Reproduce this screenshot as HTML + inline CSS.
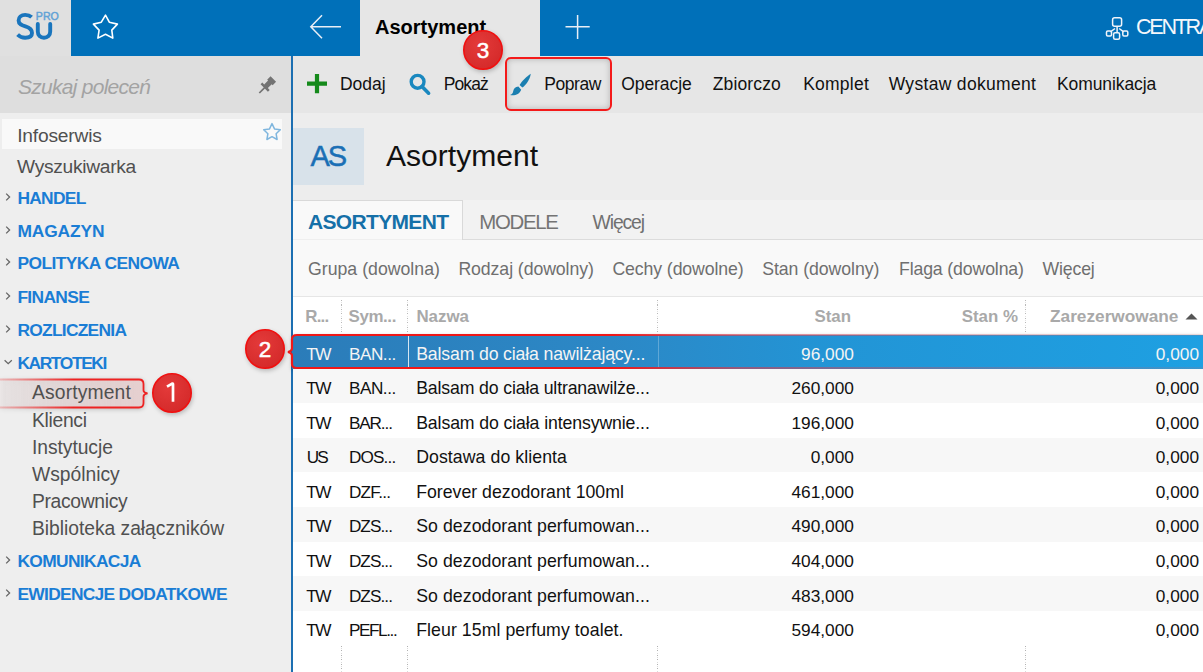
<!DOCTYPE html>
<html><head><meta charset="utf-8"><style>
html,body{margin:0;padding:0;}
body{width:1203px;height:672px;overflow:hidden;position:relative;font-family:"Liberation Sans", sans-serif;background:#fff;}
</style></head><body>
<div style="position:absolute;left:0px;top:0px;width:1203px;height:56px;background:#0070b9;"></div>
<div style="position:absolute;left:0px;top:0px;width:71px;height:56px;background:#e0e0e0;"></div>
<svg style="position:absolute;left:0;top:0" width="71" height="56">
<path d="M31.6 17.2 C29.8 15.5 27.6 14.9 25.2 14.9 C21.2 14.9 18.6 17.2 18.6 20.4 C18.6 24.3 21.8 25.3 25.4 26.4 C29.6 27.6 32 29.3 32 33 C32 36.3 29.2 37.7 25.2 37.7 C22.2 37.7 19.6 36.6 17.6 34.6" fill="none" stroke="#1a75bd" stroke-width="3.9"/>
<path d="M37.8 24 V31.6 C37.8 35.6 40.4 37.7 44 37.7 C47.6 37.7 50.2 35.6 50.2 31.6 V24" fill="none" stroke="#1a75bd" stroke-width="3.9" stroke-linecap="round"/>
<text x="35.8" y="19.9" font-family="Liberation Sans" font-weight="400" font-size="10.6" fill="#62a2d6" stroke="#62a2d6" stroke-width="0.45" textLength="23">PRO</text>
</svg>
<svg style="position:absolute;left:85px;top:8px" width="40" height="40">
<path d="M20.5 7.1 L24.3 14.2 L32.4 16.1 L26.8 22.1 L27.8 30.1 L20.5 26.3 L12.9 30.1 L14.1 22.1 L8.4 16.1 L16.3 14.2 Z" fill="none" stroke="#fff" stroke-width="1.6" stroke-linejoin="round"/>
</svg>
<svg style="position:absolute;left:300px;top:0" width="60" height="56">
<path d="M41 26.7 H11 M22 15.2 L10.8 26.7 L22 38.2" fill="none" stroke="#e8eef6" stroke-width="1.5"/>
</svg>
<div style="position:absolute;left:360px;top:0px;width:180px;height:56px;background:#e6e6e6;"></div>
<div style="position:absolute;left:375px;top:15.90px;font-size:20px;color:#000;font-weight:700;font-style:normal;white-space:nowrap;line-height:normal;">Asortyment</div>
<svg style="position:absolute;left:560px;top:10px" width="36" height="36">
<path d="M5.5 16.7 H29.7 M17.6 5 V28.9" fill="none" stroke="#e8eef6" stroke-width="1.5"/>
</svg>
<svg style="position:absolute;left:1100px;top:12px" width="34" height="32">
<g fill="none" stroke="#f0f4fa" stroke-width="1.5">
<rect x="12.6" y="5.8" width="9" height="8.5" rx="2"/>
<path d="M17.1 14.3 V20.6 M15 16.5 L10.5 19.8 M19.2 16.5 L23.6 19.8"/>
<rect x="6.5" y="19" width="5" height="5" rx="1.2"/>
<rect x="22.8" y="19" width="5" height="5" rx="1.2"/>
<rect x="13.6" y="20.8" width="6" height="6.5" rx="1.5"/>
</g></svg>
<div style="position:absolute;left:1136px;top:13.90px;font-size:21.6px;color:#f4f7fb;font-weight:400;font-style:normal;white-space:nowrap;line-height:normal;letter-spacing:-2.3px;">CENTRALA</div>
<div style="position:absolute;left:0px;top:56px;width:291px;height:616px;background:#eeeeee;"></div>
<div style="position:absolute;left:0px;top:56px;width:291px;height:57px;background:#dedede;"></div>
<div style="position:absolute;left:18px;top:75.00px;font-size:21px;color:#a3a3a3;font-weight:400;font-style:italic;white-space:nowrap;line-height:normal;letter-spacing:-0.727px;">Szukaj poleceń</div>
<svg style="position:absolute;left:0;top:0" width="291" height="112">
<g transform="translate(259.3 93) rotate(-45)" fill="#737373">
<path d="M0 0 L8 0" stroke="#737373" stroke-width="1.7"/>
<path d="M7 -5.2 L9.5 -5.2 L9.5 -2.6 L15 -2.6 L15 -3.9 L19.8 -3.9 L19.8 3.9 L15 3.9 L15 2.6 L9.5 2.6 L9.5 5.2 L7 5.2 Z"/>
</g></svg>
<div style="position:absolute;left:2px;top:119px;width:280px;height:30px;background:#f9f9f9;"></div>
<svg style="position:absolute;left:260px;top:121px" width="24" height="24">
<path d="M12 2.6 L14.5 7.9 L20.3 8.7 L16.1 12.7 L17.1 18.5 L12 15.7 L6.9 18.5 L7.9 12.7 L3.7 8.7 L9.5 7.9 Z" fill="none" stroke="#7fb6de" stroke-width="1.5" stroke-linejoin="round"/>
</svg>
<div style="position:absolute;left:17.2px;top:125.00px;font-size:19.2px;color:#505050;font-weight:400;font-style:normal;white-space:nowrap;line-height:normal;letter-spacing:-0.183px;">Infoserwis</div>
<div style="position:absolute;left:17px;top:156.00px;font-size:19.2px;color:#505050;font-weight:400;font-style:normal;white-space:nowrap;line-height:normal;letter-spacing:-0.286px;">Wyszukiwarka</div>
<div style="position:absolute;left:17.4px;top:187.80px;font-size:17.4px;color:#1a7dd5;font-weight:700;font-style:normal;white-space:nowrap;line-height:normal;letter-spacing:-0.720px;">HANDEL</div>
<svg style="position:absolute;left:0;top:189.8px" width="16" height="16"><path d="M6.2 3.6 L9.6 7 L6.2 10.4" fill="none" stroke="#666" stroke-width="1.3"/></svg>
<div style="position:absolute;left:17.4px;top:220.70px;font-size:17.4px;color:#1a7dd5;font-weight:700;font-style:normal;white-space:nowrap;line-height:normal;letter-spacing:-0.142px;">MAGAZYN</div>
<svg style="position:absolute;left:0;top:222.7px" width="16" height="16"><path d="M6.2 3.6 L9.6 7 L6.2 10.4" fill="none" stroke="#666" stroke-width="1.3"/></svg>
<div style="position:absolute;left:17.4px;top:253.40px;font-size:17.4px;color:#1a7dd5;font-weight:700;font-style:normal;white-space:nowrap;line-height:normal;letter-spacing:-0.561px;">POLITYKA CENOWA</div>
<svg style="position:absolute;left:0;top:255.4px" width="16" height="16"><path d="M6.2 3.6 L9.6 7 L6.2 10.4" fill="none" stroke="#666" stroke-width="1.3"/></svg>
<div style="position:absolute;left:17.4px;top:286.50px;font-size:17.4px;color:#1a7dd5;font-weight:700;font-style:normal;white-space:nowrap;line-height:normal;letter-spacing:-0.658px;">FINANSE</div>
<svg style="position:absolute;left:0;top:288.5px" width="16" height="16"><path d="M6.2 3.6 L9.6 7 L6.2 10.4" fill="none" stroke="#666" stroke-width="1.3"/></svg>
<div style="position:absolute;left:17.4px;top:319.50px;font-size:17.4px;color:#1a7dd5;font-weight:700;font-style:normal;white-space:nowrap;line-height:normal;letter-spacing:-0.735px;">ROZLICZENIA</div>
<svg style="position:absolute;left:0;top:321.5px" width="16" height="16"><path d="M6.2 3.6 L9.6 7 L6.2 10.4" fill="none" stroke="#666" stroke-width="1.3"/></svg>
<div style="position:absolute;left:17.4px;top:352.60px;font-size:17.4px;color:#1a7dd5;font-weight:700;font-style:normal;white-space:nowrap;line-height:normal;letter-spacing:-1.400px;">KARTOTEKI</div>
<svg style="position:absolute;left:0;top:354.6px" width="16" height="16"><path d="M4.6 5.2 L8.2 8.6 L11.8 5.2" fill="none" stroke="#666" stroke-width="1.3"/></svg>
<div style="position:absolute;left:17.4px;top:550.70px;font-size:17.4px;color:#1a7dd5;font-weight:700;font-style:normal;white-space:nowrap;line-height:normal;letter-spacing:-0.650px;">KOMUNIKACJA</div>
<svg style="position:absolute;left:0;top:552.7px" width="16" height="16"><path d="M6.2 3.6 L9.6 7 L6.2 10.4" fill="none" stroke="#666" stroke-width="1.3"/></svg>
<div style="position:absolute;left:17.4px;top:583.60px;font-size:17.4px;color:#1a7dd5;font-weight:700;font-style:normal;white-space:nowrap;line-height:normal;letter-spacing:-0.700px;">EWIDENCJE DODATKOWE</div>
<svg style="position:absolute;left:0;top:585.6px" width="16" height="16"><path d="M6.2 3.6 L9.6 7 L6.2 10.4" fill="none" stroke="#666" stroke-width="1.3"/></svg>
<svg style="position:absolute;left:0;top:374px;filter:drop-shadow(0 1px 2px rgba(0,0,0,0.22))" width="200" height="40">
<defs><linearGradient id="hg" x1="0" x2="1" y1="0" y2="0"><stop offset="0" stop-color="#f3dede" stop-opacity="0.2"/><stop offset="1" stop-color="#e6cfcf"/></linearGradient>
<linearGradient id="hb" x1="0" x2="1" y1="0" y2="0"><stop offset="0" stop-color="#ee3333" stop-opacity="0.25"/><stop offset="0.5" stop-color="#ee2222"/><stop offset="1" stop-color="#ee2222"/></linearGradient>
<filter id="sh" x="-20%" y="-40%" width="140%" height="180%"><feGaussianBlur stdDeviation="2"/></filter></defs>
<path d="M0 5.5 H139 Q143.5 5.5 143.5 10 V16.5 Q143.5 18.6 147.5 19.4 Q143.5 20.2 143.5 22.4 V29 Q143.5 33.5 139 33.5 H0 Z" fill="url(#hg)"/>
<path d="M0 5.5 H139 Q143.5 5.5 143.5 10 V16.5 Q143.5 18.6 147.5 19.4 Q143.5 20.2 143.5 22.4 V29 Q143.5 33.5 139 33.5 H0" fill="none" stroke="url(#hb)" stroke-width="1.8"/>
</svg>
<div style="position:absolute;left:32px;top:382.30px;font-size:19.3px;color:#505050;font-weight:400;font-style:normal;white-space:nowrap;line-height:normal;letter-spacing:0.144px;">Asortyment</div>
<div style="position:absolute;left:32px;top:409.60px;font-size:19.3px;color:#505050;font-weight:400;font-style:normal;white-space:nowrap;line-height:normal;letter-spacing:-0.308px;">Klienci</div>
<div style="position:absolute;left:32px;top:436.60px;font-size:19.3px;color:#505050;font-weight:400;font-style:normal;white-space:nowrap;line-height:normal;letter-spacing:-0.061px;">Instytucje</div>
<div style="position:absolute;left:32px;top:464.20px;font-size:19.3px;color:#505050;font-weight:400;font-style:normal;white-space:nowrap;line-height:normal;letter-spacing:-0.019px;">Wspólnicy</div>
<div style="position:absolute;left:32px;top:490.90px;font-size:19.3px;color:#505050;font-weight:400;font-style:normal;white-space:nowrap;line-height:normal;letter-spacing:-0.333px;">Pracownicy</div>
<div style="position:absolute;left:32px;top:517.80px;font-size:19.3px;color:#505050;font-weight:400;font-style:normal;white-space:nowrap;line-height:normal;letter-spacing:-0.036px;">Biblioteka załączników</div>
<div style="position:absolute;left:291px;top:56px;width:2px;height:616px;background:#1c6fb2;"></div>
<div style="position:absolute;left:293px;top:56px;width:910px;height:57px;background:#e6e6e6;"></div>
<svg style="position:absolute;left:300px;top:66px" width="40" height="36">
<path d="M17 8 V27.3 M7 17.6 H27" stroke="#158a1b" stroke-width="4.2" fill="none"/>
</svg>
<svg style="position:absolute;left:400px;top:66px" width="40" height="36">
<circle cx="17.6" cy="15.8" r="6.4" fill="none" stroke="#1a88bf" stroke-width="3.4"/>
<path d="M22 20.6 L28.6 27.2" stroke="#1a88bf" stroke-width="3.6" stroke-linecap="round"/>
</svg>
<div style="position:absolute;left:340px;top:74.00px;font-size:17.5px;color:#111;font-weight:400;font-style:normal;white-space:nowrap;line-height:normal;letter-spacing:-0.037px;">Dodaj</div>
<div style="position:absolute;left:443.8px;top:74.00px;font-size:17.5px;color:#111;font-weight:400;font-style:normal;white-space:nowrap;line-height:normal;letter-spacing:-0.938px;">Pokaż</div>
<div style="position:absolute;left:544.3px;top:74.00px;font-size:17.5px;color:#111;font-weight:400;font-style:normal;white-space:nowrap;line-height:normal;letter-spacing:-0.440px;">Popraw</div>
<div style="position:absolute;left:621.2px;top:74.00px;font-size:17.5px;color:#111;font-weight:400;font-style:normal;white-space:nowrap;line-height:normal;letter-spacing:-0.057px;">Operacje</div>
<div style="position:absolute;left:712.7px;top:74.00px;font-size:17.5px;color:#111;font-weight:400;font-style:normal;white-space:nowrap;line-height:normal;letter-spacing:0.143px;">Zbiorczo</div>
<div style="position:absolute;left:803.2px;top:74.00px;font-size:17.5px;color:#111;font-weight:400;font-style:normal;white-space:nowrap;line-height:normal;letter-spacing:0.233px;">Komplet</div>
<div style="position:absolute;left:888.7px;top:74.00px;font-size:17.5px;color:#111;font-weight:400;font-style:normal;white-space:nowrap;line-height:normal;letter-spacing:0.314px;">Wystaw dokument</div>
<div style="position:absolute;left:1057px;top:74.00px;font-size:17.5px;color:#111;font-weight:400;font-style:normal;white-space:nowrap;line-height:normal;letter-spacing:-0.090px;">Komunikacja</div>
<svg style="position:absolute;left:505px;top:70px" width="30" height="30">
<path d="M25.8 3.8 C22 6.2 17 11 14.6 15 L17.4 17.6 C21.2 14.8 25 9.4 25.8 3.8 Z" fill="#1b7fb0"/>
<path d="M13.4 16.4 C10.2 16.4 8.6 18.6 8.2 21.2 C7.8 23.4 6.8 24.4 5 25 C9.6 26 14.4 24.6 16.2 19.8 Z" fill="#1b7fb0"/>
</svg>
<div style="position:absolute;left:293px;top:113px;width:910px;height:87px;background:#ededed;"></div>
<div style="position:absolute;left:293px;top:128px;width:71px;height:57px;background:#d8e2ea;"></div>
<div style="position:absolute;left:310.6px;top:140.00px;font-size:29px;color:#1a6fb5;font-weight:400;font-style:normal;white-space:nowrap;line-height:normal;letter-spacing:-2.2px;-webkit-text-stroke:0.5px #1a6fb5;">AS</div>
<div style="position:absolute;left:386px;top:139.00px;font-size:30.07px;color:#111;font-weight:400;font-style:normal;white-space:nowrap;line-height:normal;">Asortyment</div>
<div style="position:absolute;left:293px;top:200px;width:910px;height:40px;background:#f2f2f2;"></div>
<div style="position:absolute;left:293px;top:239px;width:910px;height:1px;background:#dcdcdc;"></div>
<div style="position:absolute;left:293px;top:200px;width:170px;height:40px;background:#f9f9f9;border-top:1px solid #d9d9d9;border-right:1px solid #d9d9d9;box-sizing:border-box;"></div>
<div style="position:absolute;left:293px;top:239px;width:169px;height:1px;background:#efefef;"></div>
<div style="position:absolute;left:308px;top:209.80px;font-size:21px;color:#1570a8;font-weight:700;font-style:normal;white-space:nowrap;line-height:normal;letter-spacing:-0.667px;">ASORTYMENT</div>
<div style="position:absolute;left:479.3px;top:210.80px;font-size:20.4px;color:#747474;font-weight:400;font-style:normal;white-space:nowrap;line-height:normal;letter-spacing:-1.290px;">MODELE</div>
<div style="position:absolute;left:592.6px;top:210.80px;font-size:19.4px;color:#707070;font-weight:400;font-style:normal;white-space:nowrap;line-height:normal;letter-spacing:-1.160px;">Więcej</div>
<div style="position:absolute;left:293px;top:240px;width:910px;height:56px;background:#f9f9f9;"></div>
<div style="position:absolute;left:293px;top:296px;width:910px;height:1px;background:#e6e6e6;"></div>
<div style="position:absolute;left:308px;top:259.00px;font-size:17.7px;color:#6f6f6f;font-weight:400;font-style:normal;white-space:nowrap;line-height:normal;letter-spacing:0.011px;">Grupa (dowolna)</div>
<div style="position:absolute;left:458.4px;top:259.00px;font-size:17.7px;color:#6f6f6f;font-weight:400;font-style:normal;white-space:nowrap;line-height:normal;letter-spacing:-0.077px;">Rodzaj (dowolny)</div>
<div style="position:absolute;left:612.4px;top:259.00px;font-size:17.7px;color:#6f6f6f;font-weight:400;font-style:normal;white-space:nowrap;line-height:normal;letter-spacing:-0.100px;">Cechy (dowolne)</div>
<div style="position:absolute;left:762.2px;top:259.00px;font-size:17.7px;color:#6f6f6f;font-weight:400;font-style:normal;white-space:nowrap;line-height:normal;letter-spacing:-0.058px;">Stan (dowolny)</div>
<div style="position:absolute;left:899px;top:259.00px;font-size:17.7px;color:#6f6f6f;font-weight:400;font-style:normal;white-space:nowrap;line-height:normal;letter-spacing:-0.136px;">Flaga (dowolna)</div>
<div style="position:absolute;left:1042.4px;top:259.00px;font-size:17.7px;color:#6f6f6f;font-weight:400;font-style:normal;white-space:nowrap;line-height:normal;letter-spacing:-0.140px;">Więcej</div>
<div style="position:absolute;left:293px;top:297px;width:910px;height:375px;background:#ffffff;"></div>
<div style="position:absolute;left:305.3px;top:307.40px;font-size:16.9px;color:#a9a9a9;font-weight:700;font-style:normal;white-space:nowrap;line-height:normal;letter-spacing:-0.833px;">R...</div>
<div style="position:absolute;left:348.5px;top:307.40px;font-size:16.9px;color:#a9a9a9;font-weight:700;font-style:normal;white-space:nowrap;line-height:normal;letter-spacing:-0.380px;">Sym...</div>
<div style="position:absolute;left:416.4px;top:307.40px;font-size:16.92px;color:#a9a9a9;font-weight:700;font-style:normal;white-space:nowrap;line-height:normal;">Nazwa</div>
<div style="position:absolute;right:352px;top:307.40px;font-size:16.9px;color:#a9a9a9;font-weight:700;font-style:normal;white-space:nowrap;line-height:normal;">Stan</div>
<div style="position:absolute;right:185px;top:307.40px;font-size:16.9px;color:#a9a9a9;font-weight:700;font-style:normal;white-space:nowrap;line-height:normal;">Stan %</div>
<div style="position:absolute;left:1050px;top:306.40px;font-size:17.25px;color:#a9a9a9;font-weight:700;font-style:normal;white-space:nowrap;line-height:normal;">Zarezerwowane</div>
<svg style="position:absolute;left:1183px;top:310px" width="18" height="14"><path d="M2.5 9.5 L8.5 3.5 L14.5 9.5 Z" fill="#555"/></svg>
<div style="position:absolute;left:341px;top:300px;width:1px;height:33px;background:repeating-linear-gradient(180deg,#b8b8b8 0 1px,transparent 1px 2.25px,#e2e2e2 2.25px 3.25px,transparent 3.25px 4.5px)"></div>
<div style="position:absolute;left:407px;top:300px;width:1px;height:33px;background:repeating-linear-gradient(180deg,#b8b8b8 0 1px,transparent 1px 2.25px,#e2e2e2 2.25px 3.25px,transparent 3.25px 4.5px)"></div>
<div style="position:absolute;left:657px;top:300px;width:1px;height:33px;background:repeating-linear-gradient(180deg,#b8b8b8 0 1px,transparent 1px 2.25px,#e2e2e2 2.25px 3.25px,transparent 3.25px 4.5px)"></div>
<div style="position:absolute;left:1025px;top:300px;width:1px;height:33px;background:repeating-linear-gradient(180deg,#b8b8b8 0 1px,transparent 1px 2.25px,#e2e2e2 2.25px 3.25px,transparent 3.25px 4.5px)"></div>
<div style="position:absolute;left:292px;top:335px;width:911px;height:34px;background:linear-gradient(90deg,#2b7cb9 0%,#2c88c6 35%,#2295d6 60%,#1ea0e2 100%);box-shadow:0 1px 4px rgba(0,0,0,0.3)"></div>
<svg style="position:absolute;left:280px;top:334px;overflow:visible" width="923" height="37">
<defs><linearGradient id="sg" gradientUnits="userSpaceOnUse" x1="0" x2="923" y1="0" y2="0"><stop offset="0" stop-color="#f01818"/><stop offset="0.36" stop-color="#f01818"/><stop offset="0.5" stop-color="#d83a4a" stop-opacity="0.6"/><stop offset="0.78" stop-color="#c85060" stop-opacity="0.3"/><stop offset="1" stop-color="#d06060" stop-opacity="0.15"/></linearGradient></defs>
<path d="M943 1 H17 Q12 1 12 5 V14.5 Q12 17.0 8 18.0 Q12 19.0 12 21.5 V30.0 Q12 34.0 17 34.0 H943" fill="none" stroke="url(#sg)" stroke-width="2.2"/>
</svg>
<div style="position:absolute;left:408px;top:336px;width:1px;height:31px;background:rgba(255,255,255,0.8);"></div>
<div style="position:absolute;left:658px;top:336px;width:1px;height:31px;background:rgba(255,255,255,0.25);"></div>
<div style="position:absolute;left:306.2px;top:343.70px;font-size:17.2px;color:#f4f4f4;font-weight:400;font-style:normal;white-space:nowrap;line-height:normal;letter-spacing:-1.450px;">TW</div>
<div style="position:absolute;left:348.9px;top:343.70px;font-size:17.2px;color:#f4f4f4;font-weight:400;font-style:normal;white-space:nowrap;line-height:normal;letter-spacing:-0.460px;">BAN...</div>
<div style="position:absolute;left:416.2px;top:343.70px;font-size:17.7px;color:#f4f4f4;font-weight:400;font-style:normal;white-space:nowrap;line-height:normal;letter-spacing:-0.155px;">Balsam do ciała nawilżający...</div>
<div style="position:absolute;right:349.1px;top:343.70px;font-size:17.3px;color:#f4f4f4;font-weight:400;font-style:normal;white-space:nowrap;line-height:normal;">96,000</div>
<div style="position:absolute;right:4px;top:343.70px;font-size:17.3px;color:#f4f4f4;font-weight:400;font-style:normal;white-space:nowrap;line-height:normal;">0,000</div>
<div style="position:absolute;left:293px;top:369px;width:910px;height:34px;background:#f7f7f7;"></div>
<div style="position:absolute;left:306.2px;top:378.25px;font-size:17.2px;color:#111;font-weight:400;font-style:normal;white-space:nowrap;line-height:normal;letter-spacing:-1.450px;">TW</div>
<div style="position:absolute;left:348.9px;top:378.25px;font-size:17.2px;color:#111;font-weight:400;font-style:normal;white-space:nowrap;line-height:normal;letter-spacing:-0.460px;">BAN...</div>
<div style="position:absolute;left:416.2px;top:378.25px;font-size:17.7px;color:#111;font-weight:400;font-style:normal;white-space:nowrap;line-height:normal;letter-spacing:-0.143px;">Balsam do ciała ultranawilże...</div>
<div style="position:absolute;right:349.1px;top:378.25px;font-size:17.3px;color:#111;font-weight:400;font-style:normal;white-space:nowrap;line-height:normal;">260,000</div>
<div style="position:absolute;right:4px;top:378.25px;font-size:17.3px;color:#111;font-weight:400;font-style:normal;white-space:nowrap;line-height:normal;">0,000</div>
<div style="position:absolute;left:306.2px;top:412.80px;font-size:17.2px;color:#111;font-weight:400;font-style:normal;white-space:nowrap;line-height:normal;letter-spacing:-1.450px;">TW</div>
<div style="position:absolute;left:348.9px;top:412.80px;font-size:17.2px;color:#111;font-weight:400;font-style:normal;white-space:nowrap;line-height:normal;letter-spacing:-1.120px;">BAR...</div>
<div style="position:absolute;left:416.2px;top:412.80px;font-size:17.7px;color:#111;font-weight:400;font-style:normal;white-space:nowrap;line-height:normal;letter-spacing:-0.114px;">Balsam do ciała intensywnie...</div>
<div style="position:absolute;right:349.1px;top:412.80px;font-size:17.3px;color:#111;font-weight:400;font-style:normal;white-space:nowrap;line-height:normal;">196,000</div>
<div style="position:absolute;right:4px;top:412.80px;font-size:17.3px;color:#111;font-weight:400;font-style:normal;white-space:nowrap;line-height:normal;">0,000</div>
<div style="position:absolute;left:293px;top:438px;width:910px;height:34px;background:#f7f7f7;"></div>
<div style="position:absolute;left:306.8px;top:447.35px;font-size:17.2px;color:#111;font-weight:400;font-style:normal;white-space:nowrap;line-height:normal;letter-spacing:-1.900px;">US</div>
<div style="position:absolute;left:348.9px;top:447.35px;font-size:17.2px;color:#111;font-weight:400;font-style:normal;white-space:nowrap;line-height:normal;letter-spacing:-0.840px;">DOS...</div>
<div style="position:absolute;left:416.2px;top:447.35px;font-size:17.7px;color:#111;font-weight:400;font-style:normal;white-space:nowrap;line-height:normal;letter-spacing:0.074px;">Dostawa do klienta</div>
<div style="position:absolute;right:349.1px;top:447.35px;font-size:17.3px;color:#111;font-weight:400;font-style:normal;white-space:nowrap;line-height:normal;">0,000</div>
<div style="position:absolute;right:4px;top:447.35px;font-size:17.3px;color:#111;font-weight:400;font-style:normal;white-space:nowrap;line-height:normal;">0,000</div>
<div style="position:absolute;left:306.2px;top:481.90px;font-size:17.2px;color:#111;font-weight:400;font-style:normal;white-space:nowrap;line-height:normal;letter-spacing:-1.450px;">TW</div>
<div style="position:absolute;left:348.9px;top:481.90px;font-size:17.2px;color:#111;font-weight:400;font-style:normal;white-space:nowrap;line-height:normal;letter-spacing:-0.750px;">DZF...</div>
<div style="position:absolute;left:416.2px;top:481.90px;font-size:17.7px;color:#111;font-weight:400;font-style:normal;white-space:nowrap;line-height:normal;letter-spacing:0.009px;">Forever dezodorant 100ml</div>
<div style="position:absolute;right:349.1px;top:481.90px;font-size:17.3px;color:#111;font-weight:400;font-style:normal;white-space:nowrap;line-height:normal;">461,000</div>
<div style="position:absolute;right:4px;top:481.90px;font-size:17.3px;color:#111;font-weight:400;font-style:normal;white-space:nowrap;line-height:normal;">0,000</div>
<div style="position:absolute;left:293px;top:507px;width:910px;height:35px;background:#f7f7f7;"></div>
<div style="position:absolute;left:306.2px;top:516.45px;font-size:17.2px;color:#111;font-weight:400;font-style:normal;white-space:nowrap;line-height:normal;letter-spacing:-1.450px;">TW</div>
<div style="position:absolute;left:348.9px;top:516.45px;font-size:17.2px;color:#111;font-weight:400;font-style:normal;white-space:nowrap;line-height:normal;letter-spacing:-0.930px;">DZS...</div>
<div style="position:absolute;left:416.2px;top:516.45px;font-size:17.7px;color:#111;font-weight:400;font-style:normal;white-space:nowrap;line-height:normal;letter-spacing:0.062px;">So dezodorant perfumowan...</div>
<div style="position:absolute;right:349.1px;top:516.45px;font-size:17.3px;color:#111;font-weight:400;font-style:normal;white-space:nowrap;line-height:normal;">490,000</div>
<div style="position:absolute;right:4px;top:516.45px;font-size:17.3px;color:#111;font-weight:400;font-style:normal;white-space:nowrap;line-height:normal;">0,000</div>
<div style="position:absolute;left:306.2px;top:551.00px;font-size:17.2px;color:#111;font-weight:400;font-style:normal;white-space:nowrap;line-height:normal;letter-spacing:-1.450px;">TW</div>
<div style="position:absolute;left:348.9px;top:551.00px;font-size:17.2px;color:#111;font-weight:400;font-style:normal;white-space:nowrap;line-height:normal;letter-spacing:-0.930px;">DZS...</div>
<div style="position:absolute;left:416.2px;top:551.00px;font-size:17.7px;color:#111;font-weight:400;font-style:normal;white-space:nowrap;line-height:normal;letter-spacing:0.062px;">So dezodorant perfumowan...</div>
<div style="position:absolute;right:349.1px;top:551.00px;font-size:17.3px;color:#111;font-weight:400;font-style:normal;white-space:nowrap;line-height:normal;">404,000</div>
<div style="position:absolute;right:4px;top:551.00px;font-size:17.3px;color:#111;font-weight:400;font-style:normal;white-space:nowrap;line-height:normal;">0,000</div>
<div style="position:absolute;left:293px;top:576px;width:910px;height:35px;background:#f7f7f7;"></div>
<div style="position:absolute;left:306.2px;top:585.55px;font-size:17.2px;color:#111;font-weight:400;font-style:normal;white-space:nowrap;line-height:normal;letter-spacing:-1.450px;">TW</div>
<div style="position:absolute;left:348.9px;top:585.55px;font-size:17.2px;color:#111;font-weight:400;font-style:normal;white-space:nowrap;line-height:normal;letter-spacing:-0.930px;">DZS...</div>
<div style="position:absolute;left:416.2px;top:585.55px;font-size:17.7px;color:#111;font-weight:400;font-style:normal;white-space:nowrap;line-height:normal;letter-spacing:0.062px;">So dezodorant perfumowan...</div>
<div style="position:absolute;right:349.1px;top:585.55px;font-size:17.3px;color:#111;font-weight:400;font-style:normal;white-space:nowrap;line-height:normal;">483,000</div>
<div style="position:absolute;right:4px;top:585.55px;font-size:17.3px;color:#111;font-weight:400;font-style:normal;white-space:nowrap;line-height:normal;">0,000</div>
<div style="position:absolute;left:306.2px;top:620.10px;font-size:17.2px;color:#111;font-weight:400;font-style:normal;white-space:nowrap;line-height:normal;letter-spacing:-1.450px;">TW</div>
<div style="position:absolute;left:348.9px;top:620.10px;font-size:17.2px;color:#111;font-weight:400;font-style:normal;white-space:nowrap;line-height:normal;letter-spacing:-1.425px;">PEFL...</div>
<div style="position:absolute;left:416.2px;top:620.10px;font-size:17.7px;color:#111;font-weight:400;font-style:normal;white-space:nowrap;line-height:normal;letter-spacing:0.072px;">Fleur 15ml perfumy toalet.</div>
<div style="position:absolute;right:349.1px;top:620.10px;font-size:17.3px;color:#111;font-weight:400;font-style:normal;white-space:nowrap;line-height:normal;">594,000</div>
<div style="position:absolute;right:4px;top:620.10px;font-size:17.3px;color:#111;font-weight:400;font-style:normal;white-space:nowrap;line-height:normal;">0,000</div>
<div style="position:absolute;left:341px;top:646px;width:1px;height:26px;background:repeating-linear-gradient(180deg,#b0b0b0 0 1px,transparent 1px 2.25px,#dadada 2.25px 3.25px,transparent 3.25px 4.5px)"></div>
<div style="position:absolute;left:407px;top:646px;width:1px;height:26px;background:repeating-linear-gradient(180deg,#b0b0b0 0 1px,transparent 1px 2.25px,#dadada 2.25px 3.25px,transparent 3.25px 4.5px)"></div>
<div style="position:absolute;left:657px;top:646px;width:1px;height:26px;background:repeating-linear-gradient(180deg,#b0b0b0 0 1px,transparent 1px 2.25px,#dadada 2.25px 3.25px,transparent 3.25px 4.5px)"></div>
<div style="position:absolute;left:1025px;top:646px;width:1px;height:26px;background:repeating-linear-gradient(180deg,#b0b0b0 0 1px,transparent 1px 2.25px,#dadada 2.25px 3.25px,transparent 3.25px 4.5px)"></div>
<div style="position:absolute;left:505px;top:57px;width:107px;height:54px;box-sizing:border-box;border:2px solid #f41a1a;border-radius:6px;box-shadow:inset 0 0 6px rgba(0,0,0,0.22)"></div>
<svg style="position:absolute;left:457px;top:24px;overflow:visible" width="52" height="52"><defs><radialGradient id="bg3" cx="0.4" cy="0.35" r="0.7"><stop offset="0" stop-color="#e43a3a"/><stop offset="1" stop-color="#d42a2a"/></radialGradient></defs><circle cx="27" cy="28" r="20" fill="rgba(0,0,0,0.22)" style="filter:blur(2px)"/><circle cx="26" cy="26" r="19.2" fill="url(#bg3)" stroke="#f01010" stroke-width="1.6"/><text x="26" y="34" text-anchor="middle" font-family="Liberation Sans" font-size="22.5" fill="#fff" stroke="#fff" stroke-width="0.5">3</text></svg>
<svg style="position:absolute;left:239px;top:323px;overflow:visible" width="52" height="52"><defs><radialGradient id="bg2" cx="0.4" cy="0.35" r="0.7"><stop offset="0" stop-color="#e43a3a"/><stop offset="1" stop-color="#d42a2a"/></radialGradient></defs><circle cx="27" cy="28" r="20" fill="rgba(0,0,0,0.22)" style="filter:blur(2px)"/><circle cx="26" cy="26" r="19.2" fill="url(#bg2)" stroke="#f01010" stroke-width="1.6"/><text x="26" y="34" text-anchor="middle" font-family="Liberation Sans" font-size="22.5" fill="#fff" stroke="#fff" stroke-width="0.5">2</text></svg>
<svg style="position:absolute;left:146px;top:367px;overflow:visible" width="52" height="52"><defs><radialGradient id="bg1" cx="0.4" cy="0.35" r="0.7"><stop offset="0" stop-color="#e43a3a"/><stop offset="1" stop-color="#d42a2a"/></radialGradient></defs><circle cx="27" cy="28" r="20" fill="rgba(0,0,0,0.22)" style="filter:blur(2px)"/><circle cx="26" cy="26" r="19.2" fill="url(#bg1)" stroke="#f01010" stroke-width="1.6"/><path d="M27 34.8 V17.2 Q27 16.3 26.2 16.6 L21 19.6" fill="none" stroke="#fff" stroke-width="2.7" stroke-linejoin="round"/></svg>
</body></html>
